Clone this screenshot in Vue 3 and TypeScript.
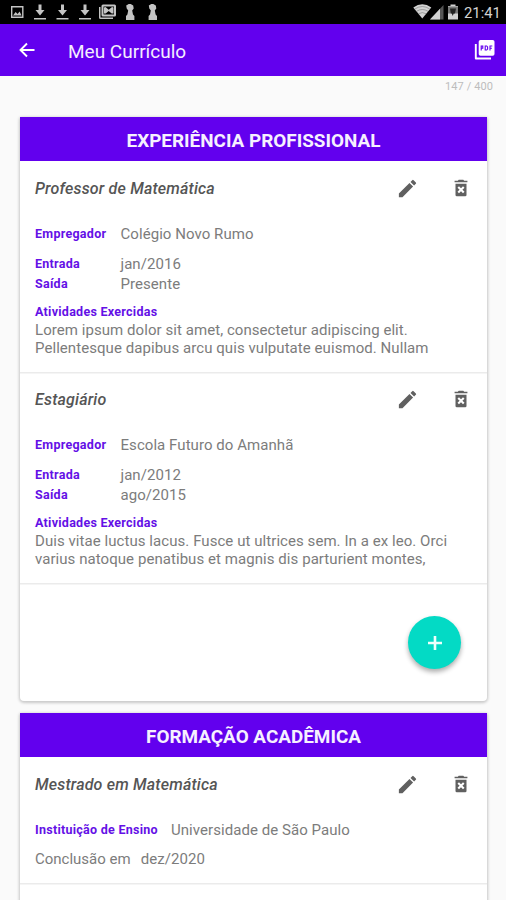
<script setup lang="ts">
interface Field {
  label: string
  value: string
  kind: string
}
interface Entry {
  title: string
  fields: Field[]
  activities: string[]
}
interface Section {
  name: string
  id: string
  entries: Entry[]
}

const sections: Section[] = [
  {
    name: 'EXPERIÊNCIA PROFISSIONAL',
    id: 'experience',
    entries: [
      {
        title: 'Professor de Matemática',
        fields: [
          { label: 'Empregador', value: 'Colégio Novo Rumo', kind: 'employer' },
          { label: 'Entrada', value: 'jan/2016', kind: 'date' },
          { label: 'Saída', value: 'Presente', kind: 'date' },
        ],
        activities: [
          'Lorem ipsum dolor sit amet, consectetur adipiscing elit.',
          'Pellentesque dapibus arcu quis vulputate euismod. Nullam',
        ],
      },
      {
        title: 'Estagiário',
        fields: [
          { label: 'Empregador', value: 'Escola Futuro do Amanhã', kind: 'employer' },
          { label: 'Entrada', value: 'jan/2012', kind: 'date' },
          { label: 'Saída', value: 'ago/2015', kind: 'date' },
        ],
        activities: [
          'Duis vitae luctus lacus. Fusce ut ultrices sem. In a ex leo. Orci',
          'varius natoque penatibus et magnis dis parturient montes,',
        ],
      },
    ],
  },
  {
    name: 'FORMAÇÃO ACADÊMICA',
    id: 'education',
    entries: [
      {
        title: 'Mestrado em Matemática',
        fields: [
          { label: 'Instituição de Ensino', value: 'Universidade de São Paulo', kind: 'school' },
          { label: 'Conclusão em', value: 'dez/2020', kind: 'finish' },
        ],
        activities: [],
      },
    ],
  },
]
</script>

<template>
  <div class="screen">
    <div class="status">
      <svg class="notifications" width="160" height="24" viewBox="0 0 160 24" fill="#c4c4c4">
        <path fill-rule="evenodd" d="M11 6h12.500v12H11zM12.400 7.400v9.200h9.700V7.400zM13 15.500l2.600-3.500 2 2 2-2.600 2 4.100z" />
        <g v-for="x in [40, 62.500, 85]" :key="x" :transform="`translate(${x} 0)`">
          <path d="M-1.500 4.500h3V10h3L0 15.500-4.500 10h3zM-6 18H6v1.600H-6z" />
        </g>
        <path fill-rule="evenodd" d="M103 4.500h11.500q1.500 0 1.500 1.500v9q0 1.500-1.500 1.500H103q-1.500 0-1.500-1.500V6q0-1.500 1.500-1.500zm.5 2v8h10.500v-8z" />
        <path d="M99 7h1.500v10.500H113V19h-12.500Q99 19 99 17.500zM104 7.500l1.500-.5 3.200 2.700L112 7l1.500.5v6h-1.800l-3-2.500-3 2.500H104z" />
        <g v-for="x in [129.700, 152.300]" :key="x" :transform="`translate(${x} 0)`">
          <path d="M-3.500 5.500-1 4h2l2.500 1.500.5 3-1.500 2 .8 4 1.400 1.500v4h-8.400v-4l1.400-1.500.8-4-1.500-2z" />
        </g>
      </svg>
      <svg class="signals" width="50" height="24" viewBox="410 0 50 24" fill="#d2d2d2">
        <path d="M413.300 7.600q9-6.500 18 0L422.300 18.500z" />
        <path d="M414.800 9q7.500-5 15 0M416.600 11.300q5.700-3.600 11.400 0M418.600 13.700q3.700-2.200 7.400 0" fill="none" stroke="#777" stroke-width=".6" />
        <path d="M430 19.500 443.500 5v14.500z" fill="#555" />
        <path d="M430 19.500 440 8.700v10.800z" />
        <path d="M450.500 6V4.500h5V6h2.500v13.500h-10V6z" />
        <path d="M448 6.500h10v7h-10z" fill="#777" />
        <path d="M450 8.500h6l-1 5h-1.300l-1 2.500-.9-2.500h-1z" fill="#222" />
      </svg>
      <span class="clock">21:41</span>
    </div>

    <header class="appbar">
      <svg class="back" width="18" height="18" viewBox="0 0 18 18" fill="none" stroke="#fff" stroke-width="1.900">
        <path d="M16.500 9H3M9 2.500 2.500 9 9 15.500" />
      </svg>
      <h1>Meu Currículo</h1>
      <svg class="pdf" width="22" height="22" viewBox="0 0 22 22">
        <path d="M1.800 5v14.500H17" fill="none" stroke="#fff" stroke-width="1.900" stroke-linejoin="round" />
        <rect x="4.700" y="1" width="15.800" height="15.800" rx="1.800" fill="#fff" />
        <path d="M7.200 11.500V7h1.600v2.300H7.200M11.200 7v4h1.500l.9-1V8l-.9-1zM16 11.500V7h2.300M16 9.200h1.900" fill="none" stroke="#6200ee" stroke-width="1.100" />
      </svg>
    </header>

    <div class="counter">147 / 400</div>

    <main>
      <section v-for="section in sections" :key="section.id" class="card" :class="section.id">
        <h2>{{ section.name }}</h2>
        <article v-for="entry in section.entries" :key="entry.title" class="entry">
          <div class="title-row">
            <h3>{{ entry.title }}</h3>
            <svg class="edit" width="23" height="23" viewBox="0 0 24 24" fill="#606060">
              <path d="M3 17.250V21h3.750L17.810 9.940l-3.750-3.750zM20.710 7.040a1 1 0 0 0 0-1.410l-2.340-2.340a1 1 0 0 0-1.410 0l-1.830 1.830 3.750 3.750z" />
            </svg>
            <svg class="trash" width="22" height="22" viewBox="0 0 24 24" fill="#606060">
              <path d="M15.500 4l-1-1h-5l-1 1H5v1.800h14V4zM6 7.300V19.500q0 1.500 1.500 1.500h9q1.500 0 1.500-1.500V7.300z" />
              <path d="m9 11 6 6m0-6-6 6" stroke="#fff" stroke-width="2.300" />
            </svg>
          </div>
          <div v-for="field in entry.fields" :key="field.label" class="field" :class="field.kind">
            <span class="label">{{ field.label }}</span>
            <span class="value">{{ field.value }}</span>
          </div>
          <div v-if="entry.activities.length" class="activities">
            <div class="label">Atividades Exercidas</div>
            <p v-for="line in entry.activities" :key="line">{{ line }}</p>
          </div>
        </article>
        <div v-if="section.id === 'experience'" class="add-row">
          <button class="fab" aria-label="Adicionar">
            <svg width="14" height="14" viewBox="0 0 14 14" stroke="#effffc" stroke-width="2.600">
              <path d="M7 0v14M0 7h14" />
            </svg>
          </button>
        </div>
      </section>
    </main>
  </div>
</template>

<style>
body {
  margin: 0;
  overflow: hidden;
}
</style>

<style scoped>
.screen {
  width: 506px;
  height: 900px;
  overflow: hidden;
  box-sizing: border-box;
  background: #fafafa;
  font-family: Roboto, sans-serif;
  color: #7c7c7c;
}
.status {
  height: 24px;
  background: #000;
  display: flex;
  align-items: center;
}
.signals {
  margin-left: 250px;
}
.clock {
  margin-left: 4px;
  padding-top: 2px;
  color: #d2d2d2;
  font-size: 14.800px;
  line-height: 24px;
}
.appbar {
  height: 52px;
  background: #6200ee;
  display: flex;
  align-items: center;
  padding: 0 10px 0 18px;
}
h1,
h2,
h3,
p {
  margin: 0;
}
h1 {
  margin-left: 32px;
  font-size: 19px;
  font-weight: 400;
  color: #f4edff;
  line-height: 24px;
  padding-top: 3px;
}
.pdf {
  margin-left: auto;
}
.counter {
  height: 41px;
  padding: 3px 13px 0 0;
  box-sizing: border-box;
  text-align: right;
  font-size: 11px;
  line-height: 15px;
  letter-spacing: 0.100px;
  color: #bdbdbd;
}
main {
  display: flex;
  flex-direction: column;
  gap: 12px;
  padding: 0 19px 0 20px;
}
.card {
  background: #fff;
  border-radius: 2px 2px 4px 4px;
  box-shadow: 0 1px 3px 1px rgba(0, 0, 0, 0.200);
}
.experience {
  height: 584px;
}
.education {
  height: 240px;
}
h2 {
  height: 44px;
  line-height: 47px;
  background: #6200ee;
  color: #f6f0ff;
  text-align: center;
  font-size: 18.900px;
  font-weight: 700;
  white-space: nowrap;
}
.entry {
  height: 211px;
  box-sizing: border-box;
  padding: 11px 15px 0;
  box-shadow: 0 1.500px 0 #ebebeb;
}
.education .entry {
  height: 126px;
}
.title-row {
  display: flex;
  align-items: center;
  height: 32px;
  margin-bottom: 19px;
}
h3 {
  flex: 1;
  font-size: 16px;
  font-weight: 500;
  font-style: italic;
  letter-spacing: 0.180px;
  color: #555;
}
.edit {
  margin-right: 31px;
}
.field {
  display: flex;
  align-items: center;
  height: 20px;
}
.label {
  font-size: 12.500px;
  font-weight: 700;
  letter-spacing: 0.270px;
  color: #6410e6;
  white-space: nowrap;
}
.value,
p {
  font-size: 15px;
  letter-spacing: 0.060px;
  white-space: nowrap;
}
.value {
  padding-top: 1px;
}
.employer .label,
.date .label {
  width: 85.500px;
}
.employer {
  margin-bottom: 10px;
}
.school {
  gap: 13px;
  margin-bottom: 9px;
}
.finish {
  gap: 10px;
}
.finish .label {
  padding-top: 1px;
  font-size: 15px;
  font-weight: 400;
  letter-spacing: 0;
  color: #7c7c7c;
}
.activities {
  padding-top: 9px;
}
.activities .label {
  height: 19px;
  line-height: 19px;
}
p {
  line-height: 18.300px;
}
.add-row {
  display: flex;
  justify-content: flex-end;
  padding: 33px 26px 0 0;
}
.fab {
  width: 53px;
  height: 53px;
  padding: 0;
  border: 0;
  border-radius: 50%;
  background: #03dac5;
  box-shadow: 0 3px 5px rgba(0, 0, 0, 0.330);
  display: flex;
  align-items: center;
  justify-content: center;
}
</style>
